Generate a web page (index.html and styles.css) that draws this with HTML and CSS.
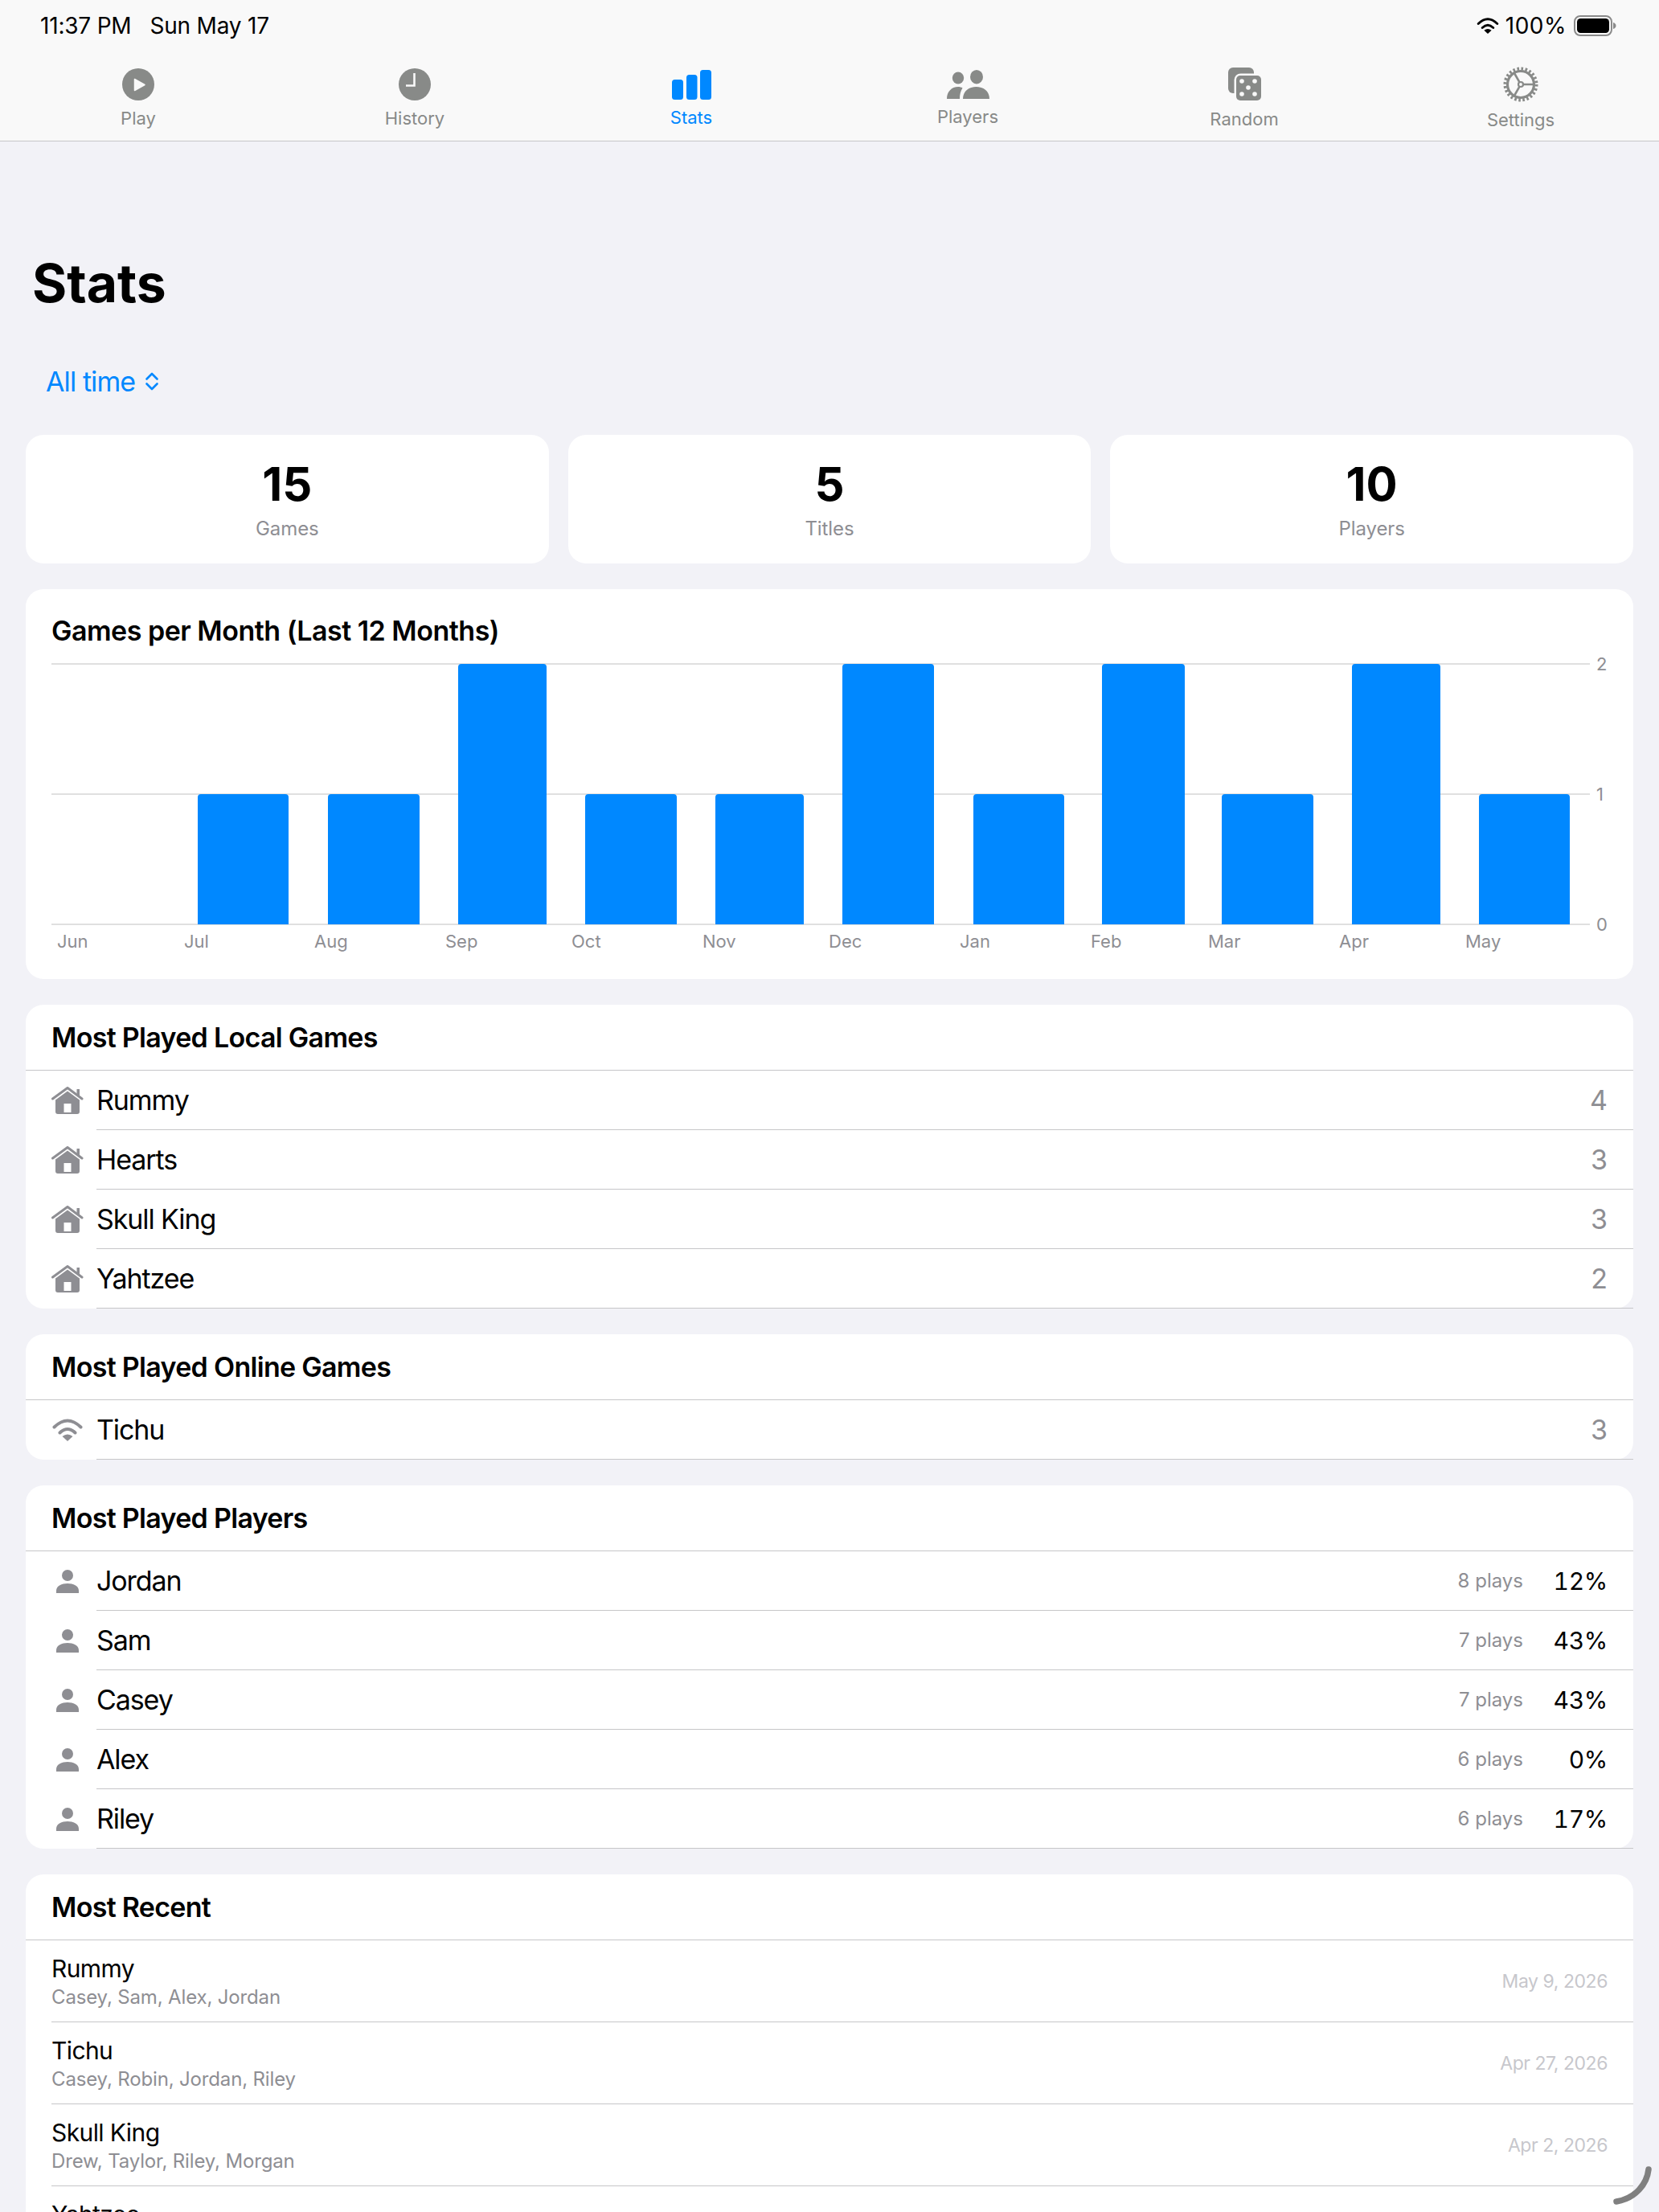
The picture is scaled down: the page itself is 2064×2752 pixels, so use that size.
FILE: index.html
```html
<!DOCTYPE html>
<html lang="en">
<head>
    <meta charset="UTF-8">
    <meta name="viewport" content="width=device-width, initial-scale=1.0">
    <title>Stats</title>
    <link rel="stylesheet" href="styles.css">
</head>
<body>
    <svg class="sprites" width="0" height="0">
        <symbol id="house" viewBox="0 0 40 34">
            <path d="M1.5 15 20 1.5 38 15" fill="none" stroke="currentColor" stroke-width="3" stroke-linecap="round" stroke-linejoin="round"/>
            <path d="M31.5 3h3.5v9l-3.5-2.5z" fill="currentColor"/>
            <path fill-rule="evenodd" fill="currentColor" d="M20 5.5 35 16.5V31a3 3 0 0 1-3 3H8a3 3 0 0 1-3-3V16.5zM15.5 21v11h9V21z"/>
        </symbol>
        <symbol id="wifi" viewBox="0 0 38 28">
            <path d="M2.5 10.5Q19-5.5 35.5 10.5M9.5 17.5Q19 8.5 28.5 17.5" fill="none" stroke="currentColor" stroke-width="4" stroke-linecap="round"/>
            <path d="M19 28 12.5 22Q19 17 25.5 22z" fill="currentColor"/>
        </symbol>
        <symbol id="person" viewBox="0 0 28 29">
            <circle cx="14" cy="7" r="7" fill="currentColor"/>
            <path d="M0 29v-3C0 20 7 17 14 17s14 3 14 9v3z" fill="currentColor"/>
        </symbol>
    </svg>

    <header class="topbar">
        <div class="status-bar">
            <div class="status-time"><span>11:37 PM</span><span>Sun May 17</span></div>
            <div class="status-right">
                <svg class="status-wifi" width="28" height="20"><use href="#wifi"/></svg>
                <span>100%</span>
                <svg width="53" height="26" viewBox="0 0 53 26">
                    <rect x="1" y="1" width="46" height="24" rx="7" fill="none" stroke="#8a8a8a" stroke-width="2"/>
                    <rect x="4" y="4" width="40" height="18" rx="4.5" fill="#000"/>
                    <path d="M49 9c2 .5 3.5 2 3.5 4s-1.5 3.5-3.5 4z" fill="#8a8a8a"/>
                </svg>
            </div>
        </div>
        <nav class="tabs">
            <div class="tab">
                <svg width="40" height="40" viewBox="0 0 40 40">
                    <circle cx="20" cy="20" r="20" fill="currentColor"/>
                    <path d="M15.5 13.5 28 20.5 15.5 27.5z" fill="#f9f9f9" stroke="#f9f9f9" stroke-width="1.5" stroke-linejoin="round"/>
                </svg>
                <span>Play</span>
            </div>
            <div class="tab">
                <svg width="40" height="40" viewBox="0 0 40 40">
                    <circle cx="20" cy="20" r="20" fill="currentColor"/>
                    <path d="M19.5 6v15.5H9" fill="none" stroke="#f9f9f9" stroke-width="2.6"/>
                </svg>
                <span>History</span>
            </div>
            <div class="tab active">
                <svg width="49" height="37" viewBox="0 0 49 37" fill="currentColor">
                    <rect x="0" y="12" width="14" height="25" rx="3.5"/>
                    <rect x="18" y="6" width="13.5" height="31" rx="3.5"/>
                    <rect x="35" y="0" width="14" height="37" rx="3.5"/>
                </svg>
                <span>Stats</span>
            </div>
            <div class="tab">
                <svg width="53" height="36" viewBox="0 0 53 36" fill="currentColor">
                    <ellipse cx="14" cy="10" rx="7.2" ry="7.4"/>
                    <ellipse cx="37" cy="8.7" rx="8" ry="8.7"/>
                    <path d="M0 36C0 27 6 21 14 21c2 0 4 .5 5.5 1.5C17 26 16 31 16 36z"/>
                    <path d="M20 36c0-10 8-15 16.5-15S53 26 53 36z"/>
                </svg>
                <span>Players</span>
            </div>
            <div class="tab">
                <svg width="41" height="42" viewBox="0 0 41 42">
                    <rect width="32" height="32" rx="6" fill="currentColor"/>
                    <rect x="7.5" y="7.5" width="36" height="36" rx="8" fill="#f9f9f9"/>
                    <rect x="10" y="10" width="31" height="31" rx="5" fill="currentColor"/>
                    <g fill="#f9f9f9">
                        <circle cx="17" cy="17" r="2.8"/>
                        <circle cx="33" cy="17" r="2.8"/>
                        <circle cx="25" cy="25" r="2.8"/>
                        <circle cx="17" cy="33" r="2.8"/>
                        <circle cx="33" cy="33" r="2.8"/>
                    </g>
                </svg>
                <span>Random</span>
            </div>
            <div class="tab">
                <svg width="44" height="44" viewBox="0 0 44 44" fill="none" stroke="currentColor">
                    <circle cx="22" cy="22" r="16.5" stroke-width="3.2"/>
                    <circle cx="22" cy="22" r="19.5" stroke-width="4" stroke-dasharray="2.6 2.5"/>
                    <circle cx="22" cy="22" r="3" stroke-width="2.2"/>
                    <path d="M25 22h13M20.5 19.4 14 8M20.5 24.6 14 36" stroke-width="2.6"/>
                </svg>
                <span>Settings</span>
            </div>
        </nav>
    </header>

    <main class="content">
        <h1 class="page-title">Stats</h1>

        <div class="range-picker">
            <span>All time</span>
            <svg width="18" height="25" viewBox="0 0 18 25" fill="none" stroke="currentColor" stroke-width="2.6" stroke-linecap="round" stroke-linejoin="round">
                <path d="M2.5 9.5 9 3l6.5 6.5M2.5 15.5 9 22l6.5-6.5"/>
            </svg>
        </div>

        <section class="stat-grid">
            <div class="stat-card"><div class="stat-value">15</div><div class="stat-label">Games</div></div>
            <div class="stat-card"><div class="stat-value">5</div><div class="stat-label">Titles</div></div>
            <div class="stat-card"><div class="stat-value">10</div><div class="stat-label">Players</div></div>
        </section>

        <section class="card chart-card">
            <h2 class="chart-title">Games per Month (Last 12 Months)</h2>
            <svg class="chart" width="2000" height="380" viewBox="32 810 2000 380">
                <g class="chart-grid">
                    <line x1="64" x2="1978" y1="826" y2="826"/>
                    <line x1="64" x2="1978" y1="988" y2="988"/>
                    <line x1="64" x2="1978" y1="1150" y2="1150"/>
                </g>
                <g class="chart-bars">
                    <path d="M246 1150V992a4 4 0 0 1 4-4h105a4 4 0 0 1 4 4v158z"/>
                    <path d="M408 1150V992a4 4 0 0 1 4-4h106a4 4 0 0 1 4 4v158z"/>
                    <path d="M570 1150V830a4 4 0 0 1 4-4h102a4 4 0 0 1 4 4v320z"/>
                    <path d="M728 1150V992a4 4 0 0 1 4-4h106a4 4 0 0 1 4 4v158z"/>
                    <path d="M890 1150V992a4 4 0 0 1 4-4h102a4 4 0 0 1 4 4v158z"/>
                    <path d="M1048 1150V830a4 4 0 0 1 4-4h106a4 4 0 0 1 4 4v320z"/>
                    <path d="M1211 1150V992a4 4 0 0 1 4-4h105a4 4 0 0 1 4 4v158z"/>
                    <path d="M1371 1150V830a4 4 0 0 1 4-4h95a4 4 0 0 1 4 4v320z"/>
                    <path d="M1520 1150V992a4 4 0 0 1 4-4h106a4 4 0 0 1 4 4v158z"/>
                    <path d="M1682 1150V830a4 4 0 0 1 4-4h102a4 4 0 0 1 4 4v320z"/>
                    <path d="M1840 1150V992a4 4 0 0 1 4-4h105a4 4 0 0 1 4 4v158z"/>
                </g>
                <g class="chart-labels">
                    <text x="71" y="1179">Jun</text>
                    <text x="229" y="1179">Jul</text>
                    <text x="391" y="1179">Aug</text>
                    <text x="554" y="1179">Sep</text>
                    <text x="711" y="1179">Oct</text>
                    <text x="874" y="1179">Nov</text>
                    <text x="1031" y="1179">Dec</text>
                    <text x="1194" y="1179">Jan</text>
                    <text x="1357" y="1179">Feb</text>
                    <text x="1503" y="1179">Mar</text>
                    <text x="1666" y="1179">Apr</text>
                    <text x="1823" y="1179">May</text>
                    <text x="1986" y="834">2</text>
                    <text x="1986" y="996">1</text>
                    <text x="1986" y="1158">0</text>
                </g>
            </svg>
        </section>

        <section class="card">
            <h2 class="card-title">Most Played Local Games</h2>
            <div class="row"><svg class="row-icon house" width="40" height="34"><use href="#house"/></svg><div class="row-body"><span class="row-name">Rummy</span><span class="row-count">4</span></div></div>
            <div class="row"><svg class="row-icon house" width="40" height="34"><use href="#house"/></svg><div class="row-body"><span class="row-name">Hearts</span><span class="row-count">3</span></div></div>
            <div class="row"><svg class="row-icon house" width="40" height="34"><use href="#house"/></svg><div class="row-body"><span class="row-name">Skull King</span><span class="row-count">3</span></div></div>
            <div class="row"><svg class="row-icon house" width="40" height="34"><use href="#house"/></svg><div class="row-body"><span class="row-name">Yahtzee</span><span class="row-count">2</span></div></div>
        </section>

        <section class="card">
            <h2 class="card-title">Most Played Online Games</h2>
            <div class="row"><svg class="row-icon" width="40" height="28"><use href="#wifi"/></svg><div class="row-body"><span class="row-name">Tichu</span><span class="row-count">3</span></div></div>
        </section>

        <section class="card">
            <h2 class="card-title">Most Played Players</h2>
            <div class="row"><svg class="row-icon" width="40" height="29"><use href="#person"/></svg><div class="row-body"><span class="row-name">Jordan</span><span class="row-plays">8 plays</span><span class="row-pct">12%</span></div></div>
            <div class="row"><svg class="row-icon" width="40" height="29"><use href="#person"/></svg><div class="row-body"><span class="row-name">Sam</span><span class="row-plays">7 plays</span><span class="row-pct">43%</span></div></div>
            <div class="row"><svg class="row-icon" width="40" height="29"><use href="#person"/></svg><div class="row-body"><span class="row-name">Casey</span><span class="row-plays">7 plays</span><span class="row-pct">43%</span></div></div>
            <div class="row"><svg class="row-icon" width="40" height="29"><use href="#person"/></svg><div class="row-body"><span class="row-name">Alex</span><span class="row-plays">6 plays</span><span class="row-pct">0%</span></div></div>
            <div class="row"><svg class="row-icon" width="40" height="29"><use href="#person"/></svg><div class="row-body"><span class="row-name">Riley</span><span class="row-plays">6 plays</span><span class="row-pct">17%</span></div></div>
        </section>

        <section class="card">
            <h2 class="card-title">Most Recent</h2>
            <div class="recent-row"><div class="recent-text"><div class="recent-name">Rummy</div><div class="recent-players">Casey, Sam, Alex, Jordan</div></div><span class="recent-date">May 9, 2026</span></div>
            <div class="recent-row"><div class="recent-text"><div class="recent-name">Tichu</div><div class="recent-players">Casey, Robin, Jordan, Riley</div></div><span class="recent-date">Apr 27, 2026</span></div>
            <div class="recent-row"><div class="recent-text"><div class="recent-name">Skull King</div><div class="recent-players">Drew, Taylor, Riley, Morgan</div></div><span class="recent-date">Apr 2, 2026</span></div>
            <div class="recent-row"><div class="recent-text"><div class="recent-name">Yahtzee</div></div></div>
        </section>
    </main>

    <!-- window resize handle in the screen corner -->
    <svg class="resize-handle" width="48" height="48" viewBox="0 0 48 48">
        <path d="M44 4C42 22 28 40 4 44" fill="none" stroke="#808080" stroke-width="7.5" stroke-linecap="round"/>
    </svg>
</body>
</html>
```

FILE: styles.css
```css
* {
    box-sizing: border-box;
}
html, body {
    height: 2752px;
    overflow: hidden;
}
body {
    margin: 0;
    position: relative;
    background: #f2f2f7;
    color: #000;
    font-family: Inter, "Noto Sans", sans-serif;
}
.sprites {
    position: absolute;
}

/* top bar */
.topbar {
    height: 176px;
    background: #f9f9f9;
    border-bottom: 1px solid #c6c6c8;
}
.status-bar {
    height: 70px;
    padding: 0 53px 6px 50px;
    display: flex;
    justify-content: space-between;
    align-items: center;
    font-size: 28px;
    letter-spacing: -0.2px;
}
.status-time {
    display: flex;
    gap: 23px;
}
.status-right {
    display: flex;
    align-items: center;
    gap: 9px;
    letter-spacing: 0.5px;
}
.status-wifi {
    margin-right: -1px;
}
.tabs {
    height: 105px;
    display: grid;
    grid-template-columns: repeat(6, 1fr);
}
.tab {
    display: flex;
    flex-direction: column;
    align-items: center;
    justify-content: center;
    gap: 9px;
    color: #888a88;
    font-size: 22px;
    line-height: 26px;
}
.tab.active {
    color: #0088ff;
}

/* page content */
.content {
    padding: 0 32px;
}
.page-title {
    margin: 136px 0 0 8px;
    font-size: 66px;
    line-height: 80px;
    font-weight: 700;
}
.range-picker {
    margin: 62px 0 0 25px;
    height: 40px;
    display: flex;
    align-items: center;
    gap: 12px;
    color: #0088ff;
    font-size: 34px;
    letter-spacing: -0.9px;
}
.stat-grid {
    margin-top: 47px;
    display: grid;
    grid-template-columns: repeat(3, 1fr);
    gap: 24px;
}
.stat-card {
    height: 160px;
    padding-top: 31px;
    background: #fff;
    border-radius: 22px;
    text-align: center;
}
.stat-value {
    font-size: 58px;
    line-height: 60px;
    font-weight: 700;
}
.stat-label {
    margin-top: 10px;
    font-size: 24px;
    line-height: 32px;
    letter-spacing: -0.1px;
    color: #8e8e93;
}

/* cards */
.card {
    margin-top: 32px;
    background: #fff;
    border-radius: 22px;
}
.chart-card {
    height: 485px;
}
.chart-title {
    margin: 0;
    height: 77px;
    padding: 32px 32px 0;
    font-size: 34px;
    line-height: 40px;
    font-weight: 600;
    letter-spacing: -0.5px;
}
.chart {
    display: block;
}
.chart-grid line {
    stroke: #e0e0e0;
    stroke-width: 2;
}
.chart-bars path {
    fill: #0088ff;
}
.chart-labels text {
    font-size: 22px;
    fill: #8e8e93;
}
.card-title {
    margin: 0;
    height: 82px;
    padding: 0 32px;
    display: flex;
    align-items: center;
    border-bottom: 1px solid #c6c6c8;
    font-size: 34px;
    font-weight: 600;
    letter-spacing: -0.7px;
}

/* list rows */
.row {
    display: flex;
    align-items: center;
    padding-left: 32px;
    gap: 16px;
}
.row-icon {
    flex: none;
    color: #8e8e93;
}
.row-icon.house {
    margin-top: -1px;
}
.row-body {
    flex: 1;
    height: 74px;
    padding-right: 32px;
    display: flex;
    align-items: center;
    border-bottom: 1px solid #c6c6c8;
}
.row-name {
    flex: 1;
    font-size: 34px;
    letter-spacing: -1.1px;
}
.row-count {
    font-size: 34px;
    color: #8e8e93;
}
.row-plays {
    font-size: 24px;
    color: #8e8e93;
}
.row-pct {
    width: 105px;
    text-align: right;
    font-size: 30px;
    letter-spacing: -0.3px;
    font-variant-numeric: tabular-nums;
}
.recent-row {
    height: 102px;
    margin-left: 32px;
    padding-right: 32px;
    display: flex;
    justify-content: space-between;
    align-items: center;
    border-bottom: 1px solid #c6c6c8;
}
.recent-text {
    align-self: flex-start;
    padding-top: 17px;
}
.recent-name {
    font-size: 30px;
    line-height: 36px;
    letter-spacing: -0.6px;
}
.recent-players {
    font-size: 24px;
    line-height: 36px;
    letter-spacing: -0.15px;
    color: #8e8e93;
}
.recent-date {
    font-size: 23px;
    letter-spacing: -0.45px;
    color: #c7c7cc;
}
.resize-handle {
    position: absolute;
    right: 9px;
    bottom: 9px;
}
```
